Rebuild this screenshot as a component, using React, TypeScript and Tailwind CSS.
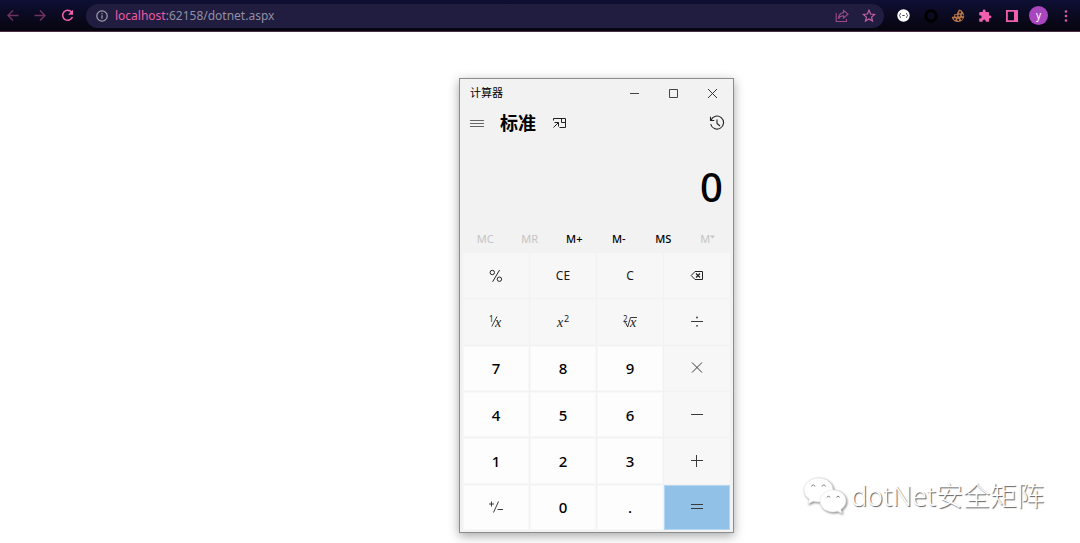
import type { ReactNode } from 'react'
import clsx from 'clsx'

const toolButton = 'flex h-full w-[27px] shrink-0 items-center justify-center'

const memoryKeys = [
  { label: 'MC', disabled: true },
  { label: 'MR', disabled: true },
  { label: 'M+', disabled: false },
  { label: 'M-', disabled: false },
  { label: 'MS', disabled: false },
]

type Key = { name: string; kind: 'digit' | 'op' | 'equals'; face: ReactNode }

// Line glyph shared by the operator keys
function Glyph({ d }: { d: string }) {
  return (
    <svg width="14" height="14" viewBox="0 0 14 14" fill="none" stroke="#3a3a3a" strokeWidth="1">
      <path d={d} />
    </svg>
  )
}

const digit = (n: string): Key => ({ name: n, kind: 'digit', face: n })

const keys: Key[] = [
  {
    name: 'Percent',
    kind: 'op',
    face: (
      <svg width="14" height="14" viewBox="0 0 14 14" fill="none" stroke="#222" strokeWidth="1">
        <circle cx="3.3" cy="3.5" r="2.2" />
        <circle cx="10.4" cy="10.2" r="2.2" />
        <path d="M10.6 1 3.6 12.8" />
      </svg>
    ),
  },
  { name: 'Clear entry', kind: 'op', face: 'CE' },
  { name: 'Clear', kind: 'op', face: 'C' },
  {
    name: 'Backspace',
    kind: 'op',
    face: (
      <svg width="14" height="14" viewBox="0 0 14 14" fill="none" stroke="#222" strokeWidth="1">
        <path d="M5 2.5h7.5v8H5L1.2 6.5z" />
        <path d="m6 4.500 4 4M10 4.500 6 8.500" strokeWidth="1.2" />
      </svg>
    ),
  },
  {
    name: 'Reciprocal',
    kind: 'op',
    face: (
      <svg width="20" height="24" viewBox="-2 -5 20 24" fill="#222">
        <text x="1" y="7" fontSize="8" className="font-['Noto_Sans']">1</text>
        <path d="M9 1.500 3.800 11.500" stroke="#222" strokeWidth="0.9" />
        <text x="7" y="12" fontSize="14" className="font-['Liberation_Serif'] italic">x</text>
      </svg>
    ),
  },
  {
    name: 'Square',
    kind: 'op',
    face: (
      <svg width="20" height="24" viewBox="-2 -5 20 24" fill="#222">
        <text x="2" y="12" fontSize="14" className="font-['Liberation_Serif'] italic">x</text>
        <text x="9" y="7" fontSize="9" className="font-['Noto_Sans']">2</text>
      </svg>
    ),
  },
  {
    name: 'Square root',
    kind: 'op',
    face: (
      <svg width="20" height="24" viewBox="-2 -5 20 24" fill="#222">
        <text x="1" y="7" fontSize="8" className="font-['Noto_Sans']">2</text>
        <path d="m2.500 8 1-.6 2.200 4.600L8.500 2.500H15" fill="none" stroke="#222" strokeWidth="0.9" />
        <text x="8" y="12" fontSize="14" className="font-['Liberation_Serif'] italic">x</text>
      </svg>
    ),
  },
  {
    name: 'Divide',
    kind: 'op',
    face: (
      <svg width="14" height="14" viewBox="0 0 14 14" fill="#3a3a3a">
        <path d="M1 6.500h12" stroke="#3a3a3a" strokeWidth="1" />
        <circle cx="7" cy="2.500" r="0.9" />
        <circle cx="7" cy="10.800" r="0.9" />
      </svg>
    ),
  },
  digit('7'),
  digit('8'),
  digit('9'),
  { name: 'Multiply', kind: 'op', face: <Glyph d="m2 1.500 10 10M12 1.500l-10 10" /> },
  digit('4'),
  digit('5'),
  digit('6'),
  { name: 'Minus', kind: 'op', face: <Glyph d="M1 6.500h12" /> },
  digit('1'),
  digit('2'),
  digit('3'),
  { name: 'Plus', kind: 'op', face: <Glyph d="M1 6.500h12M6.500 1v12" /> },
  {
    name: 'Plus or minus',
    kind: 'digit',
    face: <Glyph d="M0 4h5M2.500 1.500v5M9.500 1.500 4.500 12.500M8.500 9.500H14" />,
  },
  digit('0'),
  { name: 'Decimal', kind: 'digit', face: '.' },
  { name: 'Equals', kind: 'equals', face: <Glyph d="M1 4.500h12M1 8.500h12" /> },
]

function BrowserBar() {
  return (
    <header className="flex h-8 items-center border-b border-[#4a3046] bg-linear-to-b from-[#0e0f35] to-[#07050e] pr-px">
      <nav className="flex h-full">
        <button aria-label="Back" className={toolButton}>
          <svg width="14" height="14" viewBox="0 0 14 14" fill="none" stroke="#71325f" strokeWidth="1.4">
            <path d="M11.500 6.500H1M6 1.500l-5 5 5 5" />
          </svg>
        </button>
        <button aria-label="Forward" className={toolButton}>
          <svg width="14" height="14" viewBox="0 0 14 14" fill="none" stroke="#71325f" strokeWidth="1.4">
            <path d="M.500 6.500H11M6 1.500l5 5-5 5" />
          </svg>
        </button>
        <button aria-label="Reload" className={toolButton}>
          <svg width="14" height="14" viewBox="0 0 14 14" fill="none" stroke="#f25fae" strokeWidth="1.5">
            <path d="M10.600 3.200A5 5 0 1 0 11.400 8" />
            <path d="M12 .800v5H7z" fill="#f25fae" stroke="none" />
          </svg>
        </button>
      </nav>

      <div className="mr-1.5 ml-[5px] flex h-6 min-w-0 flex-1 items-center rounded-full bg-[#201d41] pl-2.5 pr-0.5">
        <svg className="shrink-0" width="12" height="12" viewBox="0 0 12 12" fill="none" stroke="#a3a0ac" strokeWidth="1.2">
          <circle cx="6" cy="6" r="5.2" />
          <path d="M6 5.3v3.5M6 3v1.3" />
        </svg>
        <a href="#" className="ml-[7px] flex-1 truncate text-[12px] leading-5 text-[#918fa3]">
          <span className="text-[#ee5ba8]">localhost</span>:62158/dotnet.aspx
        </a>
        <button aria-label="Share" className={toolButton}>
          <svg width="14" height="14" viewBox="0 0 14 14" fill="none" stroke="#9c4a86" strokeWidth="1.1">
            <path d="M1.2 4v8.500h10.300V10" />
            <path d="M8.500 1.500 13 5.200 8.500 9V6.800C6 6.800 4.400 7.800 3.400 9.800c.2-3.400 2-5.800 5.100-6.200z" />
          </svg>
        </button>
        <button aria-label="Bookmark" className={toolButton}>
          <svg width="14" height="14" viewBox="0 0 14 14" fill="none" stroke="#c9609f" strokeWidth="1.2">
            <path d="m7 1.300 1.600 3.700 4 .4-3 2.700.9 4L7 10l-3.500 2.100.9-4-3-2.700 4-.4z" />
          </svg>
        </button>
      </div>

      <div className="flex h-full">
        <button aria-label="JSON viewer" className={toolButton}>
          <svg width="13" height="13" viewBox="0 0 13 13" fill="none" stroke="#333" strokeWidth="0.9">
            <circle cx="6.500" cy="6.500" r="6.200" fill="#fff" stroke="none" />
            <path d="M4 4.200c-1.200 0-.6 1.900-1.600 2.300 1 .4.4 2.300 1.600 2.300M9 4.200c1.200 0 .6 1.900 1.600 2.300-1 .4-.4 2.300-1.600 2.300M5.300 6.500h2.400" />
          </svg>
        </button>
        <button aria-label="Ring extension" className={toolButton}>
          <svg width="14" height="14" viewBox="0 0 14 14" fill="none" stroke="#000" strokeWidth="3">
            <circle cx="7" cy="7" r="5.200" />
          </svg>
        </button>
        <button aria-label="Cookies" className={toolButton}>
          <svg width="14" height="14" viewBox="0 0 14 14">
            <path d="M8 .600a6.300 6.300 0 1 1-7.300 7.300l2.300-.4.500-2.500L6 5l.5-2z" fill="#b97647" />
            <g fill="#1b1020">
              <circle cx="9" cy="3.300" r="1.100" />
              <circle cx="5.200" cy="6.800" r="1.100" />
              <circle cx="8.300" cy="6.600" r="1" />
              <circle cx="11.600" cy="6.300" r="1" />
              <circle cx="3.800" cy="10" r="1" />
              <circle cx="7.200" cy="10.800" r="1.100" />
              <circle cx="10.500" cy="9.800" r="1.100" />
            </g>
          </svg>
        </button>
        <button aria-label="Extensions" className={toolButton}>
          <svg width="14" height="14" viewBox="0 0 24 24" fill="#f05fae">
            <path d="M20.500 11H19V7a2 2 0 0 0-2-2h-4V3.500a2.500 2.500 0 0 0-5 0V5H4a2 2 0 0 0-2 2v3.800h1.500a2.700 2.700 0 0 1 0 5.400H2V20a2 2 0 0 0 2 2h3.800v-1.500a2.700 2.700 0 0 1 5.400 0V22H17a2 2 0 0 0 2-2v-4h1.500a2.500 2.500 0 0 0 0-5z" />
          </svg>
        </button>
        <button aria-label="Side panel" className={toolButton}>
          <svg width="14" height="14" viewBox="0 0 14 14">
            <path fillRule="evenodd" d="M1 1h12v12H1zM2.800 2.800v8.400H9V2.800z" fill="#f05fae" />
          </svg>
        </button>
        <button aria-label="Profile" className={toolButton}>
          <span className="flex size-[19px] items-center justify-center rounded-full bg-[#a846bd] pb-0.5 text-[10px] leading-none text-white">
            y
          </span>
        </button>
        <button aria-label="Menu" className={toolButton}>
          <svg width="4" height="14" viewBox="0 0 4 14" fill="#e05aa4">
            <circle cx="2" cy="2.500" r="1.300" />
            <circle cx="2" cy="7" r="1.300" />
            <circle cx="2" cy="11.500" r="1.300" />
          </svg>
        </button>
      </div>
    </header>
  )
}

function Calculator() {
  return (
    <section className="w-[275px] border border-[#8c8c8c] bg-[#f2f2f2] pb-0.5 shadow-[0_3px_10px_rgba(0,0,0,0.35)]">
      {/* Title bar */}
      <div className="flex h-7 items-center pl-2.5 pr-px">
        <span className="flex-1 text-[11px] leading-4 text-black">计算器</span>
        <button aria-label="Minimize" className="flex h-full w-[39px] items-center justify-center">
          <svg width="9" height="9" viewBox="0 0 9 9" stroke="#444" fill="none">
            <path d="M0 4.500h9" />
          </svg>
        </button>
        <button aria-label="Maximize" className="flex h-full w-[39px] items-center justify-center">
          <svg width="9" height="9" viewBox="0 0 9 9" stroke="#444" fill="none">
            <path d="M.5.5h8v8h-8z" />
          </svg>
        </button>
        <button aria-label="Close" className="flex h-full w-[39px] items-center justify-center">
          <svg width="9" height="9" viewBox="0 0 9 9" stroke="#333" fill="none">
            <path d="m0 0 9 9M9 0 0 9" />
          </svg>
        </button>
      </div>

      {/* Mode header */}
      <div className="flex h-8 items-center pl-2.5 pr-2">
        <button aria-label="Open navigation">
          <svg width="14" height="7" viewBox="0 0 14 7" stroke="#666" fill="none">
            <path d="M0 .5h14M0 3.500h14M0 6.500h14" />
          </svg>
        </button>
        <h1 className="ml-4 text-[18px] leading-6 font-bold text-black">标准</h1>
        <button aria-label="Keep on top" className="ml-4">
          <svg width="14" height="12" viewBox="0 0 14 12" stroke="#222" fill="none">
            <path d="M1.500 3.500v-2h12v9H7.500M9.500 1.500v4h4M1.500 10.500l5-5M2.500 5.500h4v4" />
          </svg>
        </button>
        <button aria-label="History" className="ml-auto">
          <svg width="16" height="16" viewBox="0 0 16 16" stroke="#222" strokeWidth="1.100" fill="none">
            <path d="M2 5.200A6.500 6.500 0 1 1 1.700 9M1.500 1.800v3.700h3.800M8 4.500v4l3 2.500" />
          </svg>
        </button>
      </div>

      <output className="flex h-[86px] items-center justify-end pt-2.5 pr-2.5 text-[40px] leading-none font-medium text-black">
        0
      </output>

      <div className="grid h-7 grid-cols-6 px-[3px] text-[11px] leading-4">
        {memoryKeys.map(key => (
          <button
            key={key.label}
            disabled={key.disabled}
            className={key.disabled ? 'text-[#c4c4c4]' : 'font-medium text-black'}
          >
            {key.label}
          </button>
        ))}
        <button disabled aria-label="Memory list" className="flex items-center justify-center text-[#c4c4c4]">
          M
          <svg className="mb-1" width="5" height="4" viewBox="0 0 5 4" fill="#c4c4c4">
            <path d="M0 .5h5L2.500 3.500z" />
          </svg>
        </button>
      </div>

      {/* Keypad */}
      <div className="grid h-[277px] grid-cols-4 grid-rows-6 gap-px px-[3px]">
        {keys.map(key => (
          <button
            key={key.name}
            aria-label={key.name}
            className={clsx(
              'flex items-center justify-center border leading-5',
              key.kind === 'digit' && 'border-[#f8f8f8] bg-[#fdfdfd] text-[15px] font-medium text-black',
              key.kind === 'op' && 'border-[#f6f6f6] bg-[#f7f7f7] text-[12px] text-[#1a1a1a]',
              key.kind === 'equals' && 'border-[#b4d6f0] bg-[#91c1e7]',
            )}
          >
            {key.face}
          </button>
        ))}
      </div>
    </section>
  )
}

function Watermark() {
  return (
    <div className="absolute right-9 bottom-7 flex items-center gap-1">
      <svg
        className="drop-shadow-[1px_1px_1px_rgba(0,0,0,0.5)]"
        width="44"
        height="38"
        viewBox="0 0 44 38"
        fill="#fff"
        stroke="#e2e2e2"
        strokeWidth="0.6"
      >
        <path d="M15.500 1C7.500 1 1 6.300 1 13c0 3.800 2 7 5.300 9.200L5 27l5.300-2.800c1.700.5 3.400.8 5.200.8C23.500 25 30 19.700 30 13S23.500 1 15.500 1z" />
        <path d="M30 13c-7.200 0-13 4.800-13 11s5.800 11 13 11c1.600 0 3.100-.3 4.500-.7L39 36.500l-1.200-4C41 30.500 43 27.500 43 24c0-6.200-5.800-11-13-11z" />
        <path
          d="M8.500 9.500c.5-2 3-2 3.500 0M19 9.500c.5-2 3-2 3.500 0M24 20.500c.4-1.700 2.600-1.700 3 0M33.500 20.500c.4-1.700 2.600-1.700 3 0"
          fill="none"
          stroke="#777"
          strokeWidth="1"
        />
      </svg>
      <span className="text-[27px] leading-9 font-light text-white [text-shadow:1px_1px_1px_rgba(0,0,0,0.65)]">
        dotNet安全矩阵
      </span>
    </div>
  )
}

export default function App() {
  return (
    <div className="relative flex min-h-screen flex-col bg-white font-['Noto_Sans','Noto_Sans_CJK_SC',sans-serif]">
      <BrowserBar />
      <main className="flex-1 pt-[46px] pb-2.5 pl-[42.5%]">
        <Calculator />
      </main>
      <Watermark />
    </div>
  )
}
